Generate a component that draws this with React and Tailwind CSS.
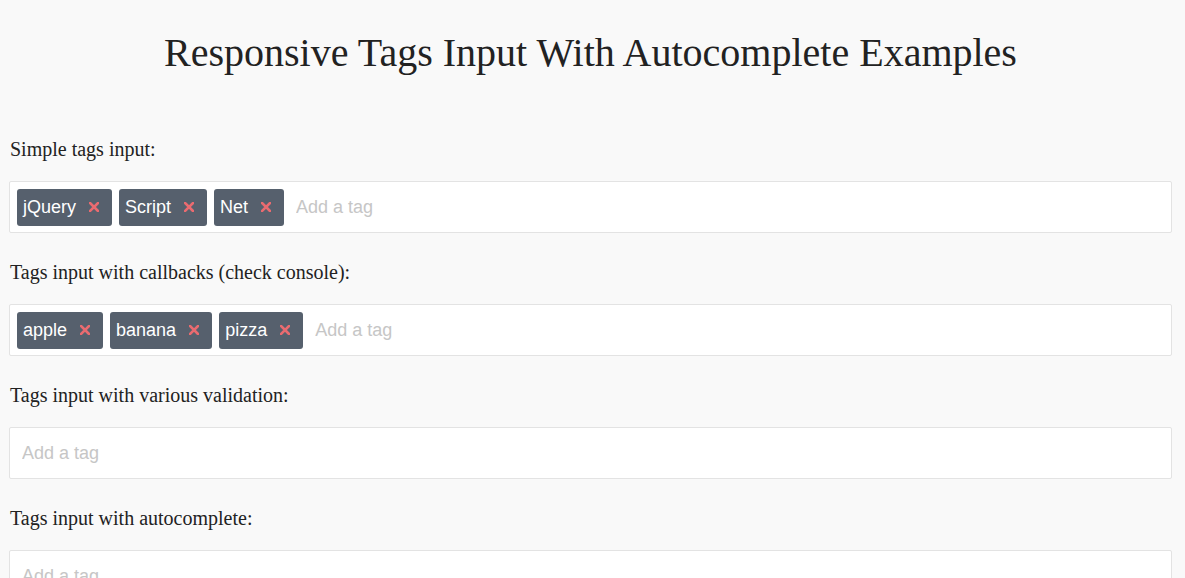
import React from 'react';

const sections = [
  { label: 'Simple tags input:', tags: ['jQuery', 'Script', 'Net'] },
  { label: 'Tags input with callbacks (check console):', tags: ['apple', 'banana', 'pizza'] },
  { label: 'Tags input with various validation:', tags: [] },
  { label: 'Tags input with autocomplete:', tags: [] },
];

function Tag({ text }) {
  return (
    <span className="flex h-[37px] items-center rounded-[3px] bg-[#56606d] pl-[6px] pr-[13px] text-[18px] text-white">
      <span>{text}</span>
      <svg className="ml-[13px]" width="10" height="10" viewBox="0 0 10 10">
        <path d="M1 1 L9 9 M9 1 L1 9" stroke="#ea6b70" strokeWidth="2.6" strokeLinecap="square" />
      </svg>
    </span>
  );
}

export default function App() {
  return (
    <div className="min-h-[578px] bg-[#f9f9f9] pb-10 pl-[9px] pr-[13px] pt-[29px] text-[#222]" style={{ fontFamily: '"Liberation Serif", serif' }}>
      <h1 className="text-center text-[40px] leading-[48px]">Responsive Tags Input With Autocomplete Examples</h1>
      <div className="mt-[60px] flex flex-col gap-[27px]">
        {sections.map((s) => (
          <div key={s.label}>
            <p className="pl-px text-[20px] leading-[24px]">{s.label}</p>
            <div
              className="mt-[20px] flex h-[52px] items-center gap-[7px] rounded-[2px] border border-[#e3e3e3] bg-white px-[7px]"
              style={{ fontFamily: '"Liberation Sans", Arial, sans-serif' }}
            >
              {s.tags.map((t) => (
                <Tag key={t} text={t} />
              ))}
              <input
                className="ml-[5px] min-w-0 flex-1 bg-transparent text-[18px] text-[#333] outline-none placeholder:text-[#c6c6c6]"
                placeholder="Add a tag"
              />
            </div>
          </div>
        ))}
      </div>
    </div>
  );
}
